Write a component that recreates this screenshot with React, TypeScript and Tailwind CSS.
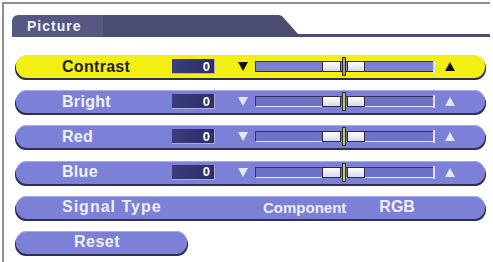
import React from "react";

const font = { fontFamily: '"Liberation Sans", Arial, sans-serif' };

function Down({ c }: { c: string }) {
  return (
    <svg width="10" height="9" viewBox="0 0 10 9" className="shrink-0">
      <polygon points="0,0 10,0 5,9" fill={c} />
    </svg>
  );
}
function Up({ c }: { c: string }) {
  return (
    <svg width="10" height="9" viewBox="0 0 10 9" className="shrink-0">
      <polygon points="0,9 10,9 5,0" fill={c} />
    </svg>
  );
}

function Slider({ active }: { active: boolean }) {
  return (
    <div
      className={
        "relative ml-[7px] w-[179px] h-[11px] shrink-0 " +
        (active
          ? "bg-[#7d80d0] border border-[#2b2b45]"
          : "bg-[#6e71c4] border-t border-l border-[#34355e] border-b border-r border-b-[#e4e6fa] border-r-[#e4e6fa]")
      }
    >
      <div className="absolute right-[-2px] top-[-2px] w-[2px] h-[13px] bg-[#dfe1f6]" />
      <div className="absolute left-[66px] top-[-1px] w-[19px] h-[11px] border border-[#2b2b45] bg-[linear-gradient(180deg,#ffffff,#d9d9e6)]" />
      <div className="absolute left-[91px] top-[-1px] w-[18px] h-[11px] border border-[#2b2b45] bg-[linear-gradient(180deg,#ffffff,#d9d9e6)]" />
      <div
        className={
          "absolute left-[86px] top-[-5px] w-[4px] h-[19px] border border-[#2b2b45] " +
          (active ? "bg-[#a8a060]" : "bg-[#c9cf3a]")
        }
      />
    </div>
  );
}

function Row({
  label,
  active = false,
}: {
  label: string;
  active?: boolean;
}) {
  const arrow = active ? "#111111" : "#e6e8f8";
  return (
    <div
      className={
        "flex items-center h-[23px] w-[469px] rounded-[11px] " +
        (active
          ? "bg-[#f4ef12] shadow-[-1px_2px_0_0_#2f3050,1px_2px_0_0_#2f3050]"
          : "bg-[#7c80d6] shadow-[-1px_2px_0_0_#2f3050,1px_2px_0_0_#2f3050,inset_0_1px_0_0_#a9acec]")
      }
    >
      <div
        className={
          "w-[156px] pl-[46px] shrink-0 text-[16px] font-bold tracking-[0.3px] leading-none " +
          (active ? "text-[#1e1e1e]" : "text-[#f0f1fb]")
        }
      >
        {label}
      </div>
      <div className="w-[43px] h-[15px] shrink-0 bg-[linear-gradient(90deg,#3b3d7c,#2d2e66)] border-b border-r border-[#a9abd8] flex items-center justify-end pr-[4px] text-white text-[13px] font-bold leading-none">
        0
      </div>
      <div className="ml-[23px]">
        <Down c={arrow} />
      </div>
      <Slider active={active} />
      <div className="ml-[11px]">
        <Up c={arrow} />
      </div>
    </div>
  );
}

export default function App() {
  return (
    <div className="w-[493px] h-[262px] bg-white overflow-hidden" style={font}>
      <div className="ml-[2px] mt-[2px] w-[488px] h-[270px] border-l-2 border-t-2 border-[#8e8e8e]">
        <div className="flex items-end ml-[8px] mt-[11px] h-[22px]">
          <div className="w-[286px] h-[22px] shrink-0 rounded-tl-[6px] bg-[linear-gradient(90deg,#555883_0,#555883_91px,#4a4c72_91px)] [clip-path:polygon(0_0,267px_0,270px_1px,286px_19px,286px_100%,0_100%)] flex items-center pl-[15px] pb-[1px]">
            <span className="text-[#f2f2f8] text-[14px] font-bold tracking-[1px] leading-none">
              Picture
            </span>
          </div>
          <div className="flex-1 h-[3px] bg-[#4a4c72]" />
        </div>
        <div className="ml-[12px] mt-[18px] flex flex-col gap-[12.2px]">
          <Row label="Contrast" active />
          <Row label="Bright" />
          <Row label="Red" />
          <Row label="Blue" />
          <div className="flex items-center h-[23px] w-[469px] rounded-[11px] bg-[#7c80d6] shadow-[-1px_2px_0_0_#2f3050,1px_2px_0_0_#2f3050,inset_0_1px_0_0_#a9acec] text-[#eeeffa] font-bold leading-none">
            <div className="w-[247px] pl-[46px] shrink-0 text-[16px] tracking-[1px]">
              Signal Type
            </div>
            <div className="text-[15px]">Component</div>
            <div className="ml-[33px] text-[16px]">RGB</div>
          </div>
          <div className="flex items-center h-[23px] w-[171px] rounded-[11px] bg-[#7c80d6] shadow-[-1px_2px_0_0_#2f3050,1px_2px_0_0_#2f3050,inset_0_1px_0_0_#a9acec] text-[#f0f1fb] font-bold leading-none">
            <div className="pl-[58px] text-[16px] tracking-[0.5px]">Reset</div>
          </div>
        </div>
      </div>
    </div>
  );
}
